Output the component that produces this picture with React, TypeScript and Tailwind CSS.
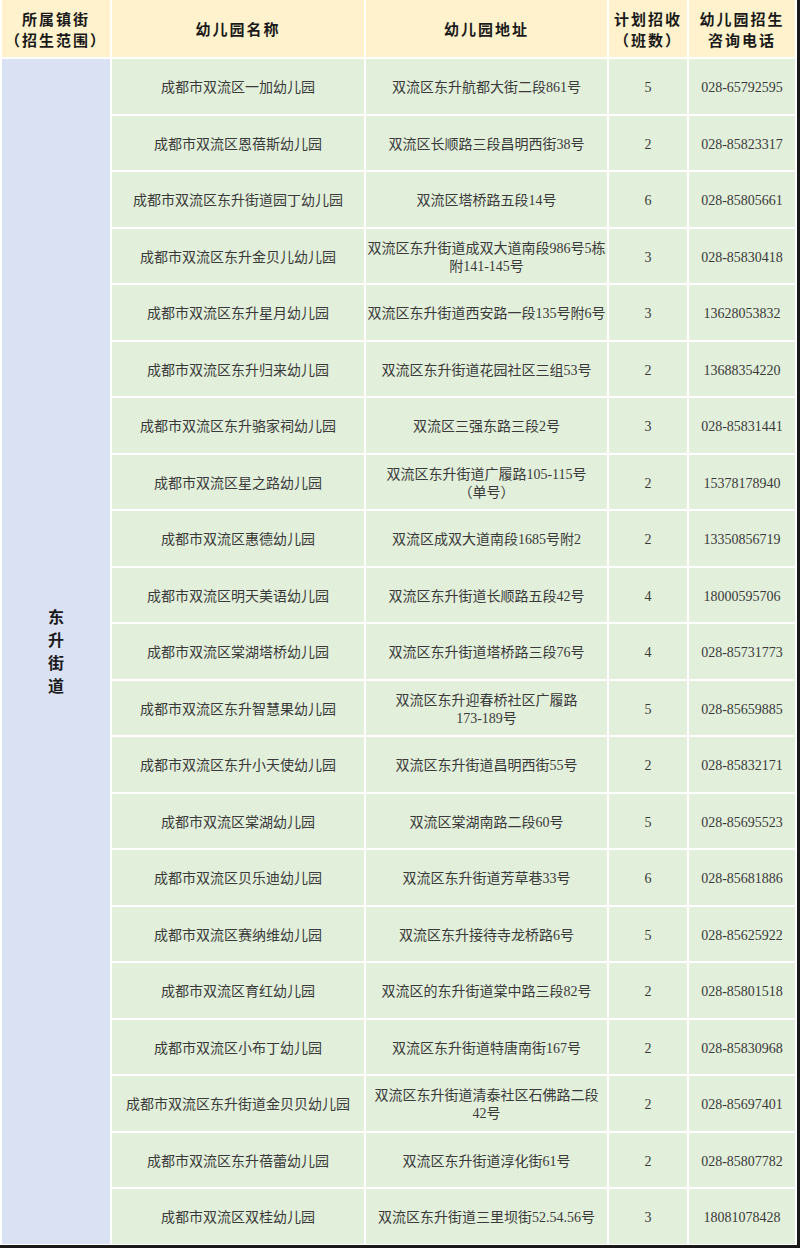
// Enrollment table: 东升街道 kindergartens
const rows: [string, string[], string, string][] = [
  ["成都市双流区一加幼儿园", ["双流区东升航都大街二段861号"], "5", "028-65792595"],
  ["成都市双流区恩蓓斯幼儿园", ["双流区长顺路三段昌明西街38号"], "2", "028-85823317"],
  ["成都市双流区东升街道园丁幼儿园", ["双流区塔桥路五段14号"], "6", "028-85805661"],
  ["成都市双流区东升金贝儿幼儿园", ["双流区东升街道成双大道南段986号5栋", "附141-145号"], "3", "028-85830418"],
  ["成都市双流区东升星月幼儿园", ["双流区东升街道西安路一段135号附6号"], "3", "13628053832"],
  ["成都市双流区东升归来幼儿园", ["双流区东升街道花园社区三组53号"], "2", "13688354220"],
  ["成都市双流区东升骆家祠幼儿园", ["双流区三强东路三段2号"], "3", "028-85831441"],
  ["成都市双流区星之路幼儿园", ["双流区东升街道广履路105-115号", "（单号）"], "2", "15378178940"],
  ["成都市双流区惠德幼儿园", ["双流区成双大道南段1685号附2"], "2", "13350856719"],
  ["成都市双流区明天美语幼儿园", ["双流区东升街道长顺路五段42号"], "4", "18000595706"],
  ["成都市双流区棠湖塔桥幼儿园", ["双流区东升街道塔桥路三段76号"], "4", "028-85731773"],
  ["成都市双流区东升智慧果幼儿园", ["双流区东升迎春桥社区广履路", "173-189号"], "5", "028-85659885"],
  ["成都市双流区东升小天使幼儿园", ["双流区东升街道昌明西街55号"], "2", "028-85832171"],
  ["成都市双流区棠湖幼儿园", ["双流区棠湖南路二段60号"], "5", "028-85695523"],
  ["成都市双流区贝乐迪幼儿园", ["双流区东升街道芳草巷33号"], "6", "028-85681886"],
  ["成都市双流区赛纳维幼儿园", ["双流区东升接待寺龙桥路6号"], "5", "028-85625922"],
  ["成都市双流区育红幼儿园", ["双流区的东升街道棠中路三段82号"], "2", "028-85801518"],
  ["成都市双流区小布丁幼儿园", ["双流区东升街道特唐南街167号"], "2", "028-85830968"],
  ["成都市双流区东升街道金贝贝幼儿园", ["双流区东升街道清泰社区石佛路二段", "42号"], "2", "028-85697401"],
  ["成都市双流区东升蓓蕾幼儿园", ["双流区东升街道淳化街61号"], "2", "028-85807782"],
  ["成都市双流区双桂幼儿园", ["双流区东升街道三里坝街52.54.56号"], "3", "18081078428"],
]

const cell = "bg-[#e2efda] flex flex-col items-center justify-center pt-[4px] text-center text-[14px] leading-[18px] text-[#3a3a3a]"
const head = "bg-[#fff2cc] flex flex-col items-center justify-center pt-[4px] text-center text-[15px] leading-[21px] font-bold tracking-[2px] text-[#1a1a1a]"

export default function App() {
  return (
    <div className="w-[800px] h-[1248px] bg-white pl-[2px] pr-[2px] pb-[2px] border-r-[3px] border-b-[3px] border-[#1a1a1a] font-['Liberation_Serif','Noto_Sans_CJK_SC',serif] overflow-hidden">
      <div className="grid grid-cols-[108px_252px_241px_78px_1fr] grid-rows-[57px_repeat(21,54.5px)] gap-[2px]">
        {/* Header */}
        <div className={head}>
          <span>所属镇街</span>
          <span>（招生范围）</span>
        </div>
        <div className={head}>幼儿园名称</div>
        <div className={head}>幼儿园地址</div>
        <div className={head}>
          <span>计划招收</span>
          <span>（班数）</span>
        </div>
        <div className={head}>
          <span>幼儿园招生</span>
          <span>咨询电话</span>
        </div>

        {/* Street column spanning all rows */}
        <div className="bg-[#d9e1f2] row-[span_21_/_span_21] flex flex-col items-center justify-center pt-[2px] text-[16px] leading-[23px] font-bold text-[#1a1a1a]">
          <span>东</span>
          <span>升</span>
          <span>街</span>
          <span>道</span>
        </div>

        {rows.map(([name, addr, classes, phone]) => (
          <div key={name} className="contents">
            <div className={cell}>
              <span className="whitespace-nowrap">{name}</span>
            </div>
            <div className={cell}>
              {addr.map((line) => (
                <span key={line} className="whitespace-nowrap">{line}</span>
              ))}
            </div>
            <div className={cell}>{classes}</div>
            <div className={cell}>{phone}</div>
          </div>
        ))}
      </div>
    </div>
  )
}
